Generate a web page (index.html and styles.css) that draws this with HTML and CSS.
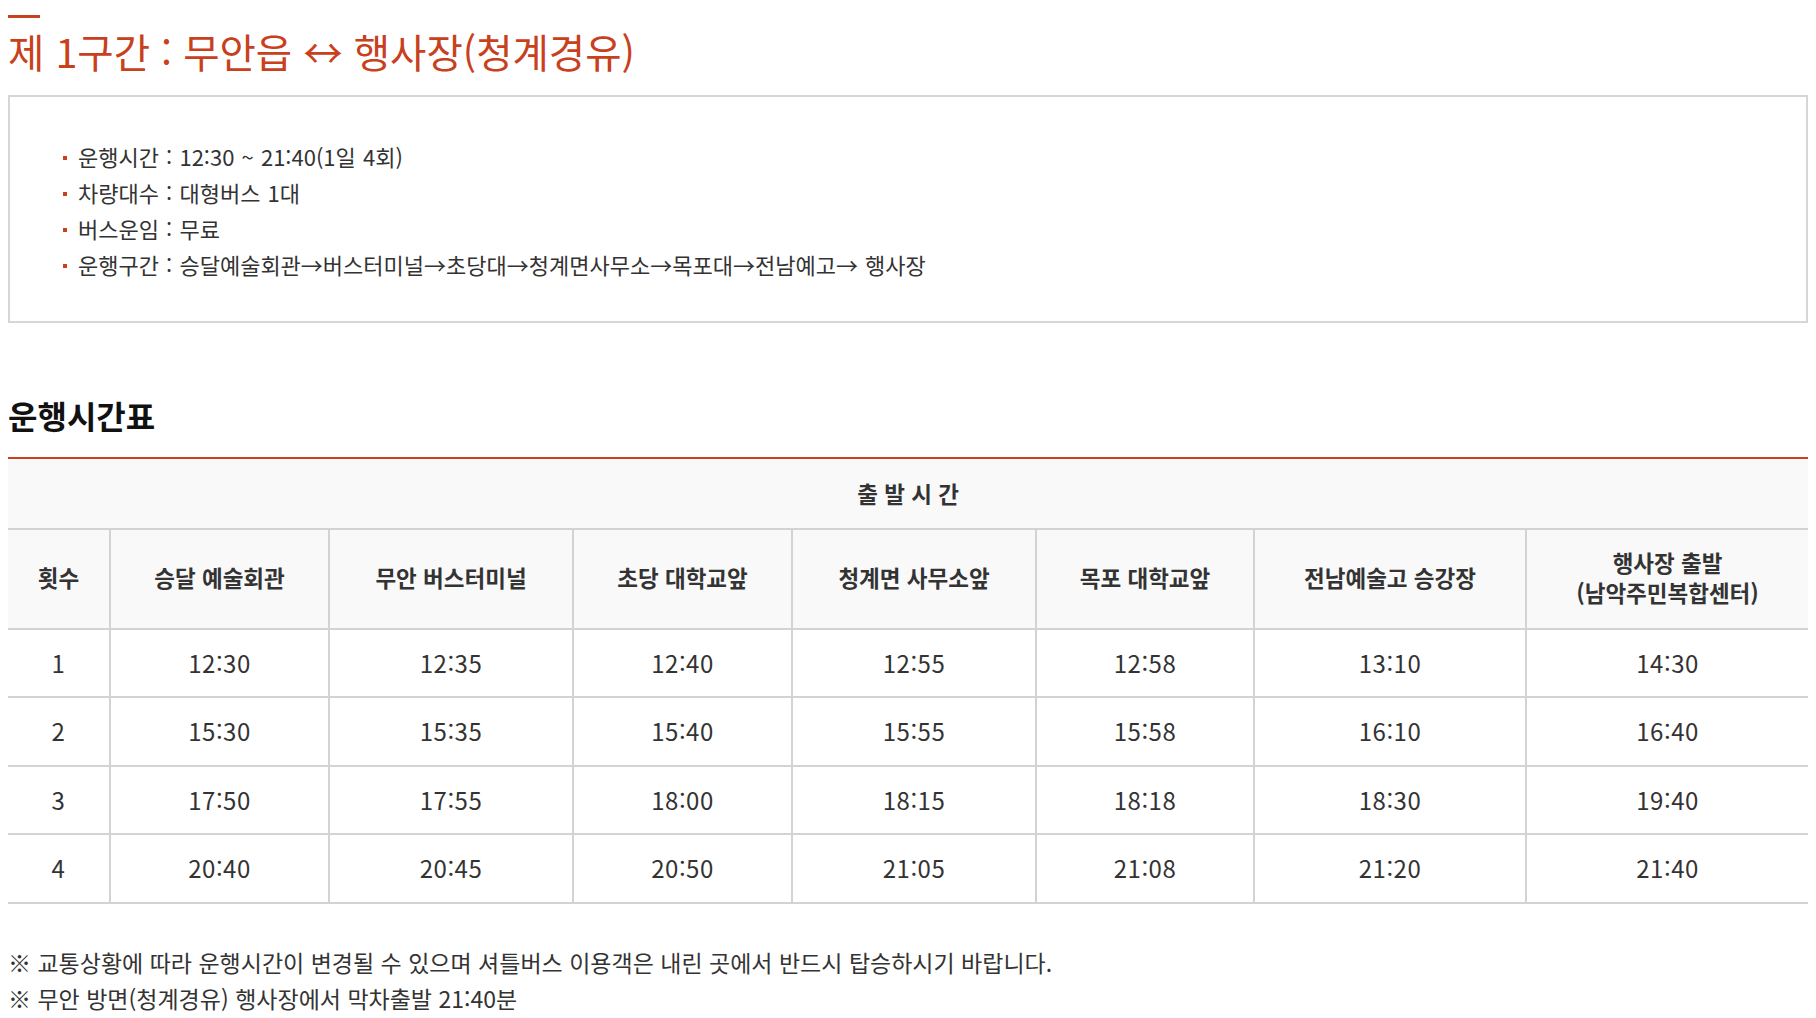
FILE: index.html
```html
<!DOCTYPE html>
<html lang="ko">
<head>
<meta charset="utf-8">
<title>제 1구간 : 무안읍 ↔ 행사장(청계경유)</title>
<link rel="stylesheet" href="styles.css">
</head>
<body>
<div class="page">
  <div class="title-bar"></div>
  <h2 class="section-title">제 1구간 : 무안읍 ↔ 행사장(청계경유)</h2>

  <div class="info-box">
    <ul class="info-list">
      <li>운행시간 : 12:30 ~ 21:40(1일 4회)</li>
      <li>차량대수 : 대형버스 1대</li>
      <li>버스운임 : 무료</li>
      <li>운행구간 : 승달예술회관→버스터미널→초당대→청계면사무소→목포대→전남예고→ 행사장</li>
    </ul>
  </div>

  <h3 class="table-title">운행시간표</h3>

  <table class="timetable">
    <colgroup>
      <col class="c-no">
      <col class="c-a">
      <col class="c-b">
      <col class="c-a">
      <col class="c-b">
      <col class="c-c">
      <col class="c-d">
      <col class="c-e">
    </colgroup>
    <thead>
      <tr class="head-top">
        <th colspan="8">출 발 시 간</th>
      </tr>
      <tr class="head-cols">
        <th>횟수</th>
        <th>승달 예술회관</th>
        <th>무안 버스터미널</th>
        <th>초당 대학교앞</th>
        <th>청계면 사무소앞</th>
        <th>목포 대학교앞</th>
        <th>전남예술고 승강장</th>
        <th>행사장 출발<br>(남악주민복합센터)</th>
      </tr>
    </thead>
    <tbody>
      <tr><td>1</td><td>12:30</td><td>12:35</td><td>12:40</td><td>12:55</td><td>12:58</td><td>13:10</td><td>14:30</td></tr>
      <tr><td>2</td><td>15:30</td><td>15:35</td><td>15:40</td><td>15:55</td><td>15:58</td><td>16:10</td><td>16:40</td></tr>
      <tr><td>3</td><td>17:50</td><td>17:55</td><td>18:00</td><td>18:15</td><td>18:18</td><td>18:30</td><td>19:40</td></tr>
      <tr><td>4</td><td>20:40</td><td>20:45</td><td>20:50</td><td>21:05</td><td>21:08</td><td>21:20</td><td>21:40</td></tr>
    </tbody>
  </table>

  <div class="notes">
    <p>※ 교통상황에 따라 운행시간이 변경될 수 있으며 셔틀버스 이용객은 내린 곳에서 반드시 탑승하시기 바랍니다.</p>
    <p>※ 무안 방면(청계경유) 행사장에서 막차출발 21:40분</p>
  </div>
</div>
</body>
</html>
```

FILE: styles.css
```css
* {
  box-sizing: border-box;
}

html, body {
  margin: 0;
  padding: 0;
  background: #ffffff;
}

body {
  font-family: "Noto Sans CJK KR", "Noto Sans", sans-serif;
  color: #333333;
}

.page {
  padding: 15px 8px 0 8px;
}

.title-bar {
  width: 32px;
  height: 3px;
  background: #c8401c;
}

.section-title {
  margin: 6px 0 17px 0;
  font-size: 39.5px;
  line-height: 54px;
  font-weight: 400;
  color: #c8401c;
  letter-spacing: 0;
}

.info-box {
  border: 2px solid #d6d6d6;
  padding: 41px 20px 39px 53px;
}

.info-list {
  list-style: none;
  margin: 0;
  padding: 0;
}

.info-list li {
  display: flex;
  align-items: center;
  font-size: 22px;
  line-height: 36px;
  color: #333333;
  letter-spacing: 0;
  word-spacing: 1px;
}

.info-list li::before {
  content: "";
  flex: 0 0 4px;
  width: 4px;
  height: 4px;
  margin: 4px 11px 0 0;
  background: #c8401c;
}

.table-title {
  margin: 72px 0 22px 0;
  font-size: 32px;
  line-height: 40px;
  font-weight: 700;
  color: #111111;
  letter-spacing: 0;
}

.timetable {
  width: 1800px;
  border-collapse: collapse;
  table-layout: fixed;
  border-top: 2px solid #c8401c;
}

.c-no { width: 102px; }
.c-a { width: 219px; }
.c-b { width: 244px; }
.c-c { width: 218px; }
.c-d { width: 272px; }
.c-e { width: 282px; }

.timetable th,
.timetable td {
  padding: 0;
  text-align: center;
  vertical-align: middle;
  border-bottom: 2px solid #d3d3d3;
  border-left: 2px solid #d3d3d3;
  color: #333333;
}

.timetable th:first-child,
.timetable td:first-child {
  border-left: 0;
}

.timetable th {
  background: #f9f9f9;
  font-size: 22.5px;
  font-weight: 700;
  letter-spacing: 0;
}

.head-top th {
  line-height: 69px;
}

.head-cols th {
  line-height: 30px;
  padding: 17px 0 21px 0;
}

.timetable td {
  font-size: 24px;
  line-height: 66.4px;
  font-weight: 400;
  letter-spacing: 0.5px;
  background: #ffffff;
}

.notes {
  margin-top: 40px;
}

.notes p {
  margin: 0;
  font-size: 23px;
  line-height: 36px;
  color: #333333;
  letter-spacing: 0;
}
```
